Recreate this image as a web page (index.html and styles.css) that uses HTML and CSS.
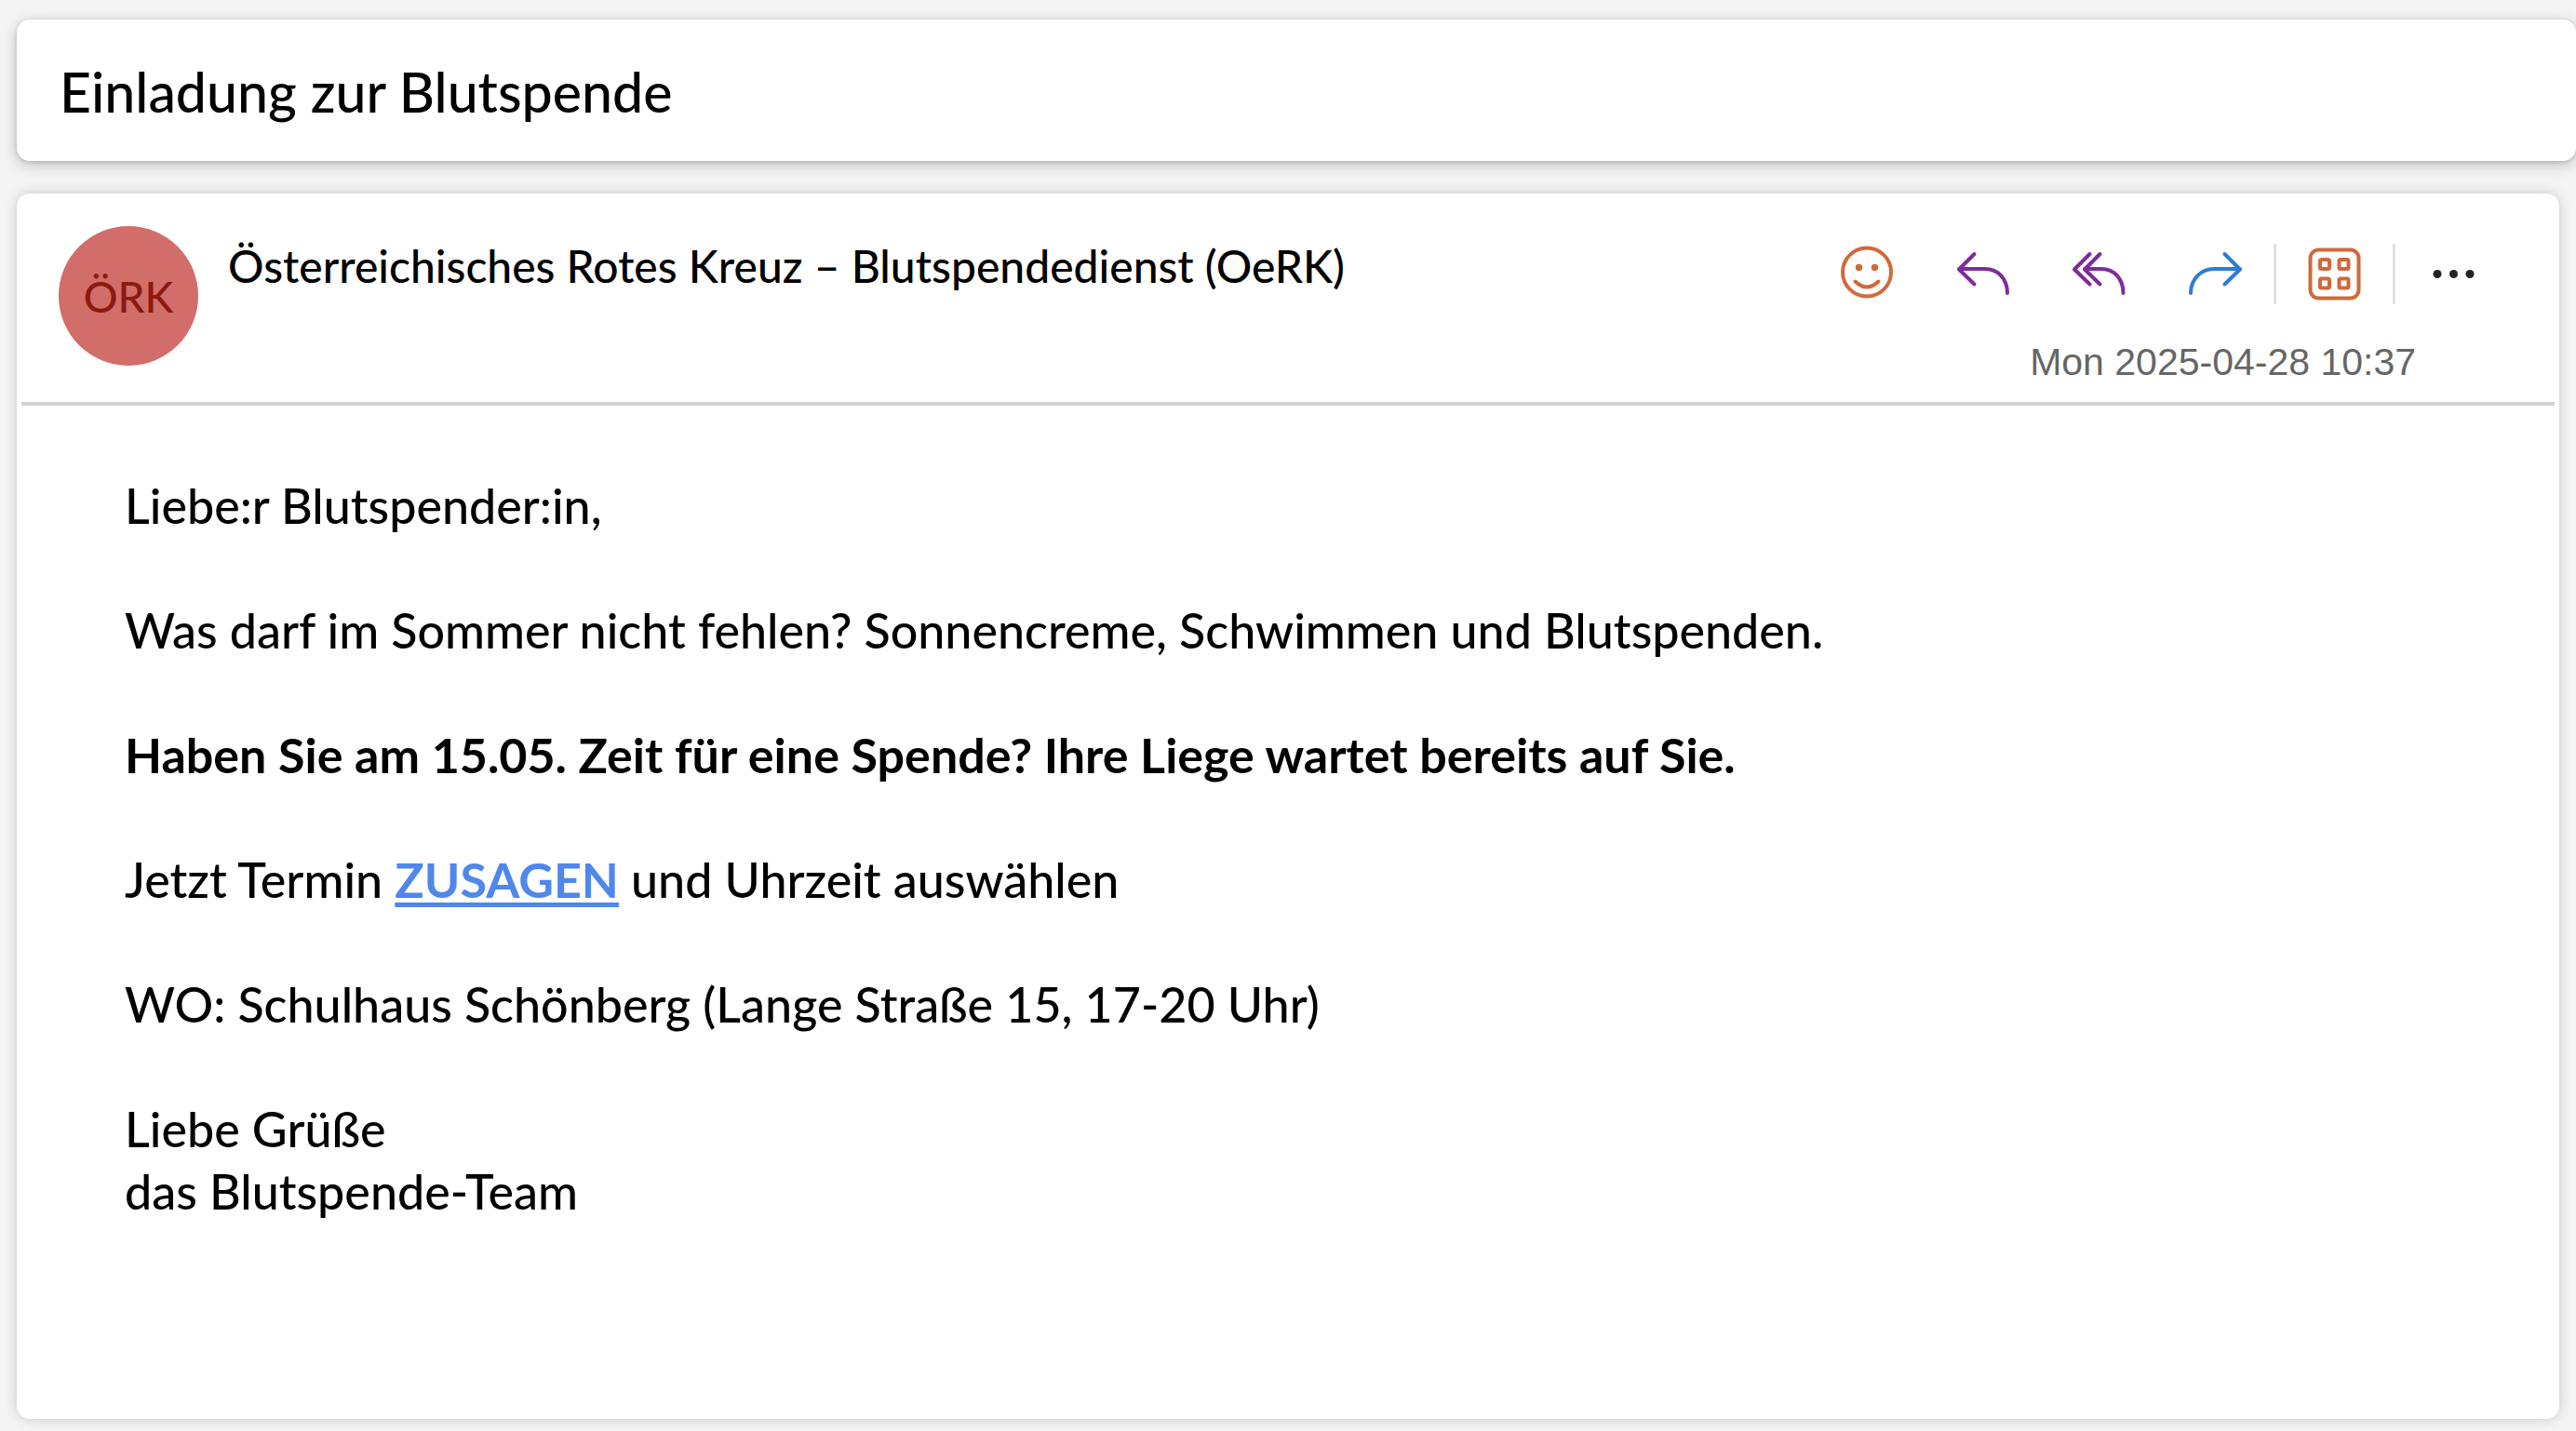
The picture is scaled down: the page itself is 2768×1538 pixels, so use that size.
FILE: index.html
```
<!DOCTYPE html>
<html lang="de">
<head>
<meta charset="utf-8">
<meta name="viewport" content="width=device-width, initial-scale=1">
<title>Einladung zur Blutspende</title>
<link rel="stylesheet" href="styles.css">
</head>
<body>
<header class="subject">
  <h1 class="subject-title">Einladung zur Blutspende</h1>
</header>
<main class="message">
  <div class="message-head">
    <div class="avatar">ÖRK</div>
    <h2 class="sender">Österreichisches Rotes Kreuz – Blutspendedienst (OeRK)</h2>
    <div class="meta">
      <div class="actions">
        <button class="action orange" type="button" aria-label="Reagieren">
          <svg class="icon" viewBox="0 0 65 65"><circle cx="33" cy="30.500" r="26"/><path d="M20.500 40.500Q33 52.500 45.500 40.500"/><g class="solid"><circle cx="24.500" cy="25.500" r="3.700"/><circle cx="41.500" cy="25.500" r="3.700"/></g></svg>
        </button>
        <button class="action purple" type="button" aria-label="Antworten">
          <svg class="icon" viewBox="0 0 65 65"><path d="M23.500 11L7 27.500L23.500 43.500M7 27H35C49 27 59 38 59 53"/></svg>
        </button>
        <button class="action purple" type="button" aria-label="Allen antworten">
          <svg class="icon" viewBox="0 0 65 65"><path d="M22.500 11L6 27.500L22.500 43.500M33.500 11L17 27.500L33.500 43.500M17 27H35C49 27 58.500 38 58.500 53"/></svg>
        </button>
        <button class="action blue" type="button" aria-label="Weiterleiten">
          <svg class="icon" viewBox="0 0 65 65"><path d="M42.500 11L59 27.500L42.500 43.500M59 27H31C17 27 6 38 6 53"/></svg>
        </button>
        <span class="separator"></span>
        <button class="action orange" type="button" aria-label="Apps">
          <svg class="icon" viewBox="0 0 65 65"><rect x="6.500" y="6.500" width="52" height="52" rx="9"/><rect x="17" y="17" width="10" height="10" rx="1.500"/><rect x="37.500" y="17" width="10" height="10" rx="1.500"/><rect x="17" y="37.500" width="10" height="10" rx="1.500"/><rect x="37.500" y="37.500" width="10" height="10" rx="1.500"/></svg>
        </button>
        <span class="separator"></span>
        <button class="action dark" type="button" aria-label="Weitere Aktionen">
          <svg class="icon" viewBox="0 0 65 65"><g class="solid"><circle cx="15" cy="32.500" r="4.500"/><circle cx="32.500" cy="32.500" r="4.500"/><circle cx="50" cy="32.500" r="4.500"/></g></svg>
        </button>
      </div>
      <time class="date" datetime="2025-04-28T10:37">Mon 2025-04-28 10:37</time>
    </div>
  </div>
  <article class="message-body">
    <p>Liebe:r Blutspender:in,</p>
    <p>Was darf im Sommer nicht fehlen? Sonnencreme, Schwimmen und Blutspenden.</p>
    <p><strong>Haben Sie am 15.05. Zeit für eine Spende? Ihre Liege wartet bereits auf Sie.</strong></p>
    <p>Jetzt Termin <a class="accept" href="#zusagen">ZUSAGEN</a> und Uhrzeit auswählen</p>
    <p>WO: Schulhaus Schönberg (Lange Straße 15, 17-20 Uhr)</p>
    <p>Liebe Grüße<br>das Blutspende-Team</p>
  </article>
</main>
</body>
</html>
```
FILE: styles.css
```
* {
  box-sizing: border-box;
}

body {
  display: flex;
  flex-direction: column;
  gap: 35px;
  min-height: 100vh;
  margin: 0;
  padding: 21px 0 13px 18px;
  background: #f4f4f4;
  color: #000;
  font-family: Lato, sans-serif;
  font-weight: 500;
}

h1,
h2,
p {
  margin: 0;
  font-weight: 500;
}

strong {
  font-weight: 700;
}

.subject {
  padding: 42px 46px 38px;
  background: #fff;
  border-radius: 14px;
  box-shadow: 0 4px 16px rgba(0, 0, 0, 0.22), 0 1px 4px rgba(0, 0, 0, 0.14);
}

.subject-title {
  font-size: 59px;
  line-height: 72px;
}

.message {
  flex: 1;
  margin-right: 18px;
  background: #fff;
  border-radius: 14px;
  box-shadow: 0 0 14px rgba(0, 0, 0, 0.18);
}

.message-head {
  display: flex;
  align-items: flex-start;
  margin: 0 5px;
  padding: 35px 46px 19px 40px;
  border-bottom: 4px solid #d2d2d2;
}

.avatar {
  display: flex;
  flex: none;
  align-items: center;
  justify-content: center;
  width: 150px;
  height: 150px;
  border-radius: 50%;
  background: #d26d69;
  color: #8c1a11;
  font-size: 46px;
}

.sender {
  flex: 1;
  margin-left: 32px;
  padding-top: 15px;
  font-size: 48px;
  line-height: 56px;
}

.meta {
  display: flex;
  flex-direction: column;
  gap: 38px;
  padding-top: 19px;
}

.actions {
  display: flex;
}

.action {
  width: 125px;
  height: 65px;
  padding: 0;
  border: 0;
  background: none;
  cursor: pointer;
}

.orange {
  color: #d06a3a;
}

.purple {
  color: #7d2c98;
}

.blue {
  color: #2f7cd3;
}

.dark {
  color: #242424;
}

.icon {
  display: block;
  width: 65px;
  height: 65px;
  margin: 0 auto;
  fill: none;
  stroke: currentColor;
  stroke-width: 4;
  stroke-linecap: round;
  stroke-linejoin: round;
}

.solid {
  fill: currentColor;
  stroke: none;
}

.separator {
  width: 3px;
  background: #e0e0e0;
}

.date {
  padding-right: 103px;
  color: #666;
  font-family: "Liberation Sans", Arial, sans-serif;
  font-size: 41px;
  font-weight: 400;
  line-height: 48px;
  text-align: right;
}

.message-body {
  display: flex;
  flex-direction: column;
  gap: 67px;
  padding: 74px 116px;
  font-size: 52px;
  line-height: 67px;
}

.accept {
  color: #4f87ec;
  font-weight: 700;
  text-decoration-thickness: 5px;
  text-underline-offset: 5px;
  text-decoration-skip-ink: none;
}
```
